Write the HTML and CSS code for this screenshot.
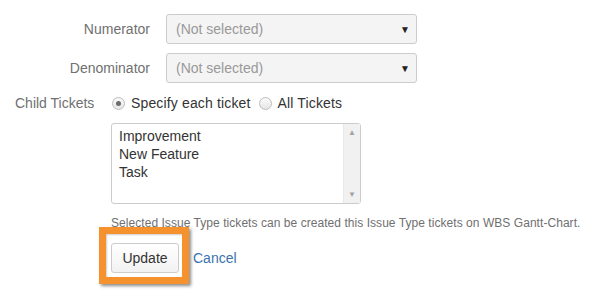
FILE: index.html
```html
<!DOCTYPE html>
<html>
<head>
<meta charset="utf-8">
<link rel="stylesheet" href="styles.css">
</head>
<body>
<div class="page">
  <div class="fields">
    <label class="label">Numerator</label>
    <div class="select"><span class="placeholder">(Not selected)</span><span class="caret">▼</span></div>
    <label class="label">Denominator</label>
    <div class="select"><span class="placeholder">(Not selected)</span><span class="caret">▼</span></div>
  </div>
  <div class="child-row">
    <span class="child-label">Child Tickets</span>
    <div class="radios">
      <span class="radio checked"></span><span class="radio-text">Specify each ticket</span>
      <span class="radio"></span><span class="radio-text">All Tickets</span>
    </div>
  </div>
  <div class="indent">
    <div class="listbox">
      <div class="items">
        <div>Improvement</div>
        <div>New Feature</div>
        <div>Task</div>
      </div>
      <div class="scrollbar"><span class="arrow">▲</span><span class="arrow">▼</span></div>
    </div>
    <p class="help">Selected Issue Type tickets can be created this Issue Type tickets on WBS Gantt-Chart.</p>
    <div class="actions">
      <div class="btn-wrap">
        <button class="btn">Update</button>
        <span class="highlight"></span>
      </div>
      <a class="cancel" href="#">Cancel</a>
    </div>
  </div>
</div>
</body>
</html>
```

FILE: styles.css
```css
* { box-sizing: border-box; }
html, body { margin: 0; padding: 0; background: #fff; }
body {
  font-family: "Liberation Sans", Arial, sans-serif;
  font-size: 14px;
  color: #333;
}
.page { padding-top: 14px; width: 591px; height: 292px; overflow: hidden; }
.fields {
  display: grid;
  grid-template-columns: 150px 251px;
  column-gap: 16px;
  row-gap: 9px;
  align-items: center;
}
.label { text-align: right; color: #707070; }
.select {
  height: 30px;
  border: 1px solid #ccc;
  border-radius: 3px;
  background: #f4f4f4;
  display: flex;
  align-items: center;
  justify-content: space-between;
  padding: 0 6px 0 9px;
}
.placeholder { color: #999; }
.caret { font-size: 10px; color: #222; }
.child-row {
  display: flex;
  align-items: center;
  height: 20px;
  margin-top: 10px;
  padding-left: 15px;
}
.child-label { color: #707070; width: 97px; }
.radios { display: flex; align-items: center; }
.radio {
  width: 13px; height: 13px;
  border-radius: 50%;
  border: 1px solid #bdbdbd;
  background: linear-gradient(#fafafa, #e6e6e6);
  margin-right: 6px;
  position: relative;
}
.radio.checked::after {
  content: "";
  position: absolute;
  left: 3px; top: 3px;
  width: 5px; height: 5px;
  border-radius: 50%;
  background: #6b6b6b;
}
.radio-text { margin-right: 8px; letter-spacing: 0.15px; }
.indent { padding-left: 111px; }
.listbox {
  margin-top: 10px;
  width: 250px;
  height: 81px;
  border: 1px solid #ccc;
  border-radius: 3px;
  display: flex;
  background: #fff;
}
.items { flex: 1; padding: 3px 7px; line-height: 18px; color: #333; }
.scrollbar {
  width: 17px;
  background: #f1f1f1;
  border-left: 1px solid #e8e8e8;
  display: flex;
  flex-direction: column;
  justify-content: space-between;
  align-items: center;
  padding: 4px 0;
}
.arrow { font-size: 8px; color: #a3a3a3; }
.help {
  margin: 11px 0 0;
  font-size: 12px;
  line-height: 16px;
  color: #707070;
  letter-spacing: 0.05px;
}
.actions {
  margin-top: 12px;
  display: flex;
  align-items: center;
  gap: 14px;
}
.btn-wrap { position: relative; }
.btn {
  display: block;
  width: 68px; height: 30px;
  font-family: "Liberation Sans", Arial, sans-serif;
  font-size: 14px;
  color: #333;
  border: 1px solid #ccc;
  border-radius: 3px;
  background: linear-gradient(#fff, #f2f2f2);
  padding: 0;
}
.highlight {
  position: absolute;
  left: -12px; top: -16px;
  width: 90px; height: 57px;
  border: 7px solid #f6922e;
  box-shadow: 2px 2px 3px rgba(0,0,0,0.45), inset 1px 1px 2px rgba(0,0,0,0.2);
}
.cancel { color: #3b73af; text-decoration: none; }
```
